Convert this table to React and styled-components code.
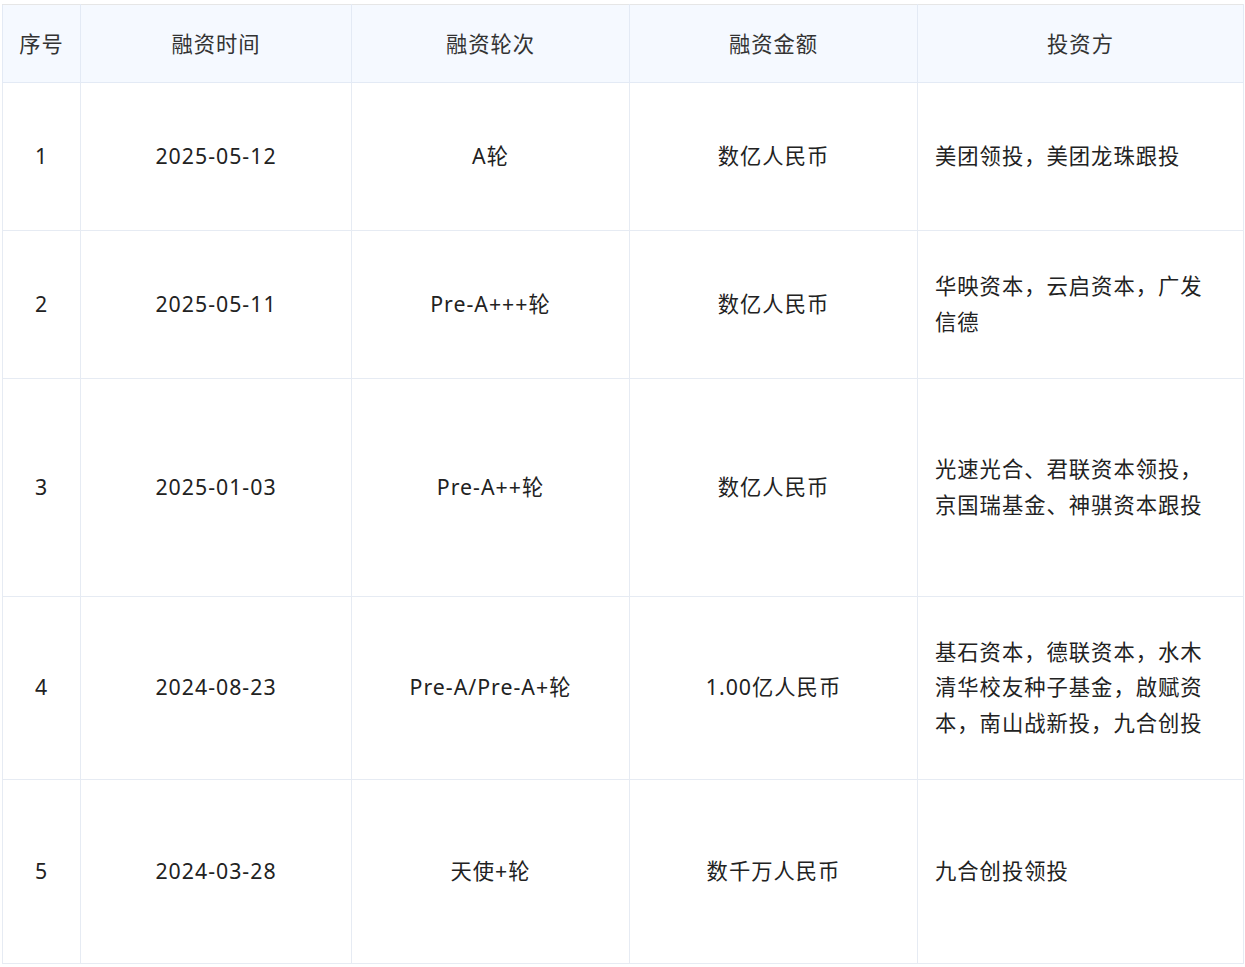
import React from "react";
import styled, { createGlobalStyle } from "styled-components";

const Global = createGlobalStyle`
  html, body { margin: 0; padding: 0; background: #fff; }
  body { font-family: "Noto Sans", "Noto Sans CJK SC", sans-serif; }
`;

const Wrap = styled.div`
  padding: 4px 0 0 2px;
`;

const Table = styled.table`
  border-collapse: collapse;
  table-layout: fixed;
  width: 1241px;
  font-size: 21.3px;
  letter-spacing: 1px;
  color: #222;
`;

const Th = styled.th`
  height: 74px;
  padding: 0 0 3px;
  background: #f5f9ff;
  border: 1px solid #e3eaf5;
  border-top-color: #e6e6e6;
  font-weight: 400;
  color: #333;
  text-align: center;
`;

const Row = styled.tr`
  height: ${(p) => p.$h}px;
`;

const Td = styled.td`
  padding: 0 0 2px;
  padding-left: ${(p) => (p.$left ? "17px" : "0")};
  padding-right: ${(p) => (p.$left ? "30px" : "0")};
  border: 1px solid #e6ebf3;
  text-align: ${(p) => (p.$left ? "left" : "center")};
  line-height: 35.5px;
  vertical-align: middle;
`;

const cols = [78, 271, 278, 288, 326];
const heads = ["序号", "融资时间", "融资轮次", "融资金额", "投资方"];
const rows = [
  { h: 148, d: ["1", "2025-05-12", "A轮", "数亿人民币", "美团领投，美团龙珠跟投"] },
  { h: 148, d: ["2", "2025-05-11", "Pre-A+++轮", "数亿人民币", "华映资本，云启资本，广发信德"] },
  { h: 218, d: ["3", "2025-01-03", "Pre-A++轮", "数亿人民币", "光速光合、君联资本领投，京国瑞基金、神骐资本跟投"] },
  { h: 183, d: ["4", "2024-08-23", "Pre-A/Pre-A+轮", "1.00亿人民币", "基石资本，德联资本，水木清华校友种子基金，啟赋资本，南山战新投，九合创投"] },
  { h: 184, d: ["5", "2024-03-28", "天使+轮", "数千万人民币", "九合创投领投"] },
];

export default function App() {
  return (
    <>
      <Global />
      <Wrap>
        <Table>
          <colgroup>
            {cols.map((w, i) => (
              <col key={i} style={{ width: w }} />
            ))}
          </colgroup>
          <thead>
            <tr>
              {heads.map((h) => (
                <Th key={h}>{h}</Th>
              ))}
            </tr>
          </thead>
          <tbody>
            {rows.map((r) => (
              <Row key={r.d[0]} $h={r.h}>
                {r.d.map((c, i) => (
                  <Td key={i} $left={i === 4}>
                    {c}
                  </Td>
                ))}
              </Row>
            ))}
          </tbody>
        </Table>
      </Wrap>
    </>
  );
}
